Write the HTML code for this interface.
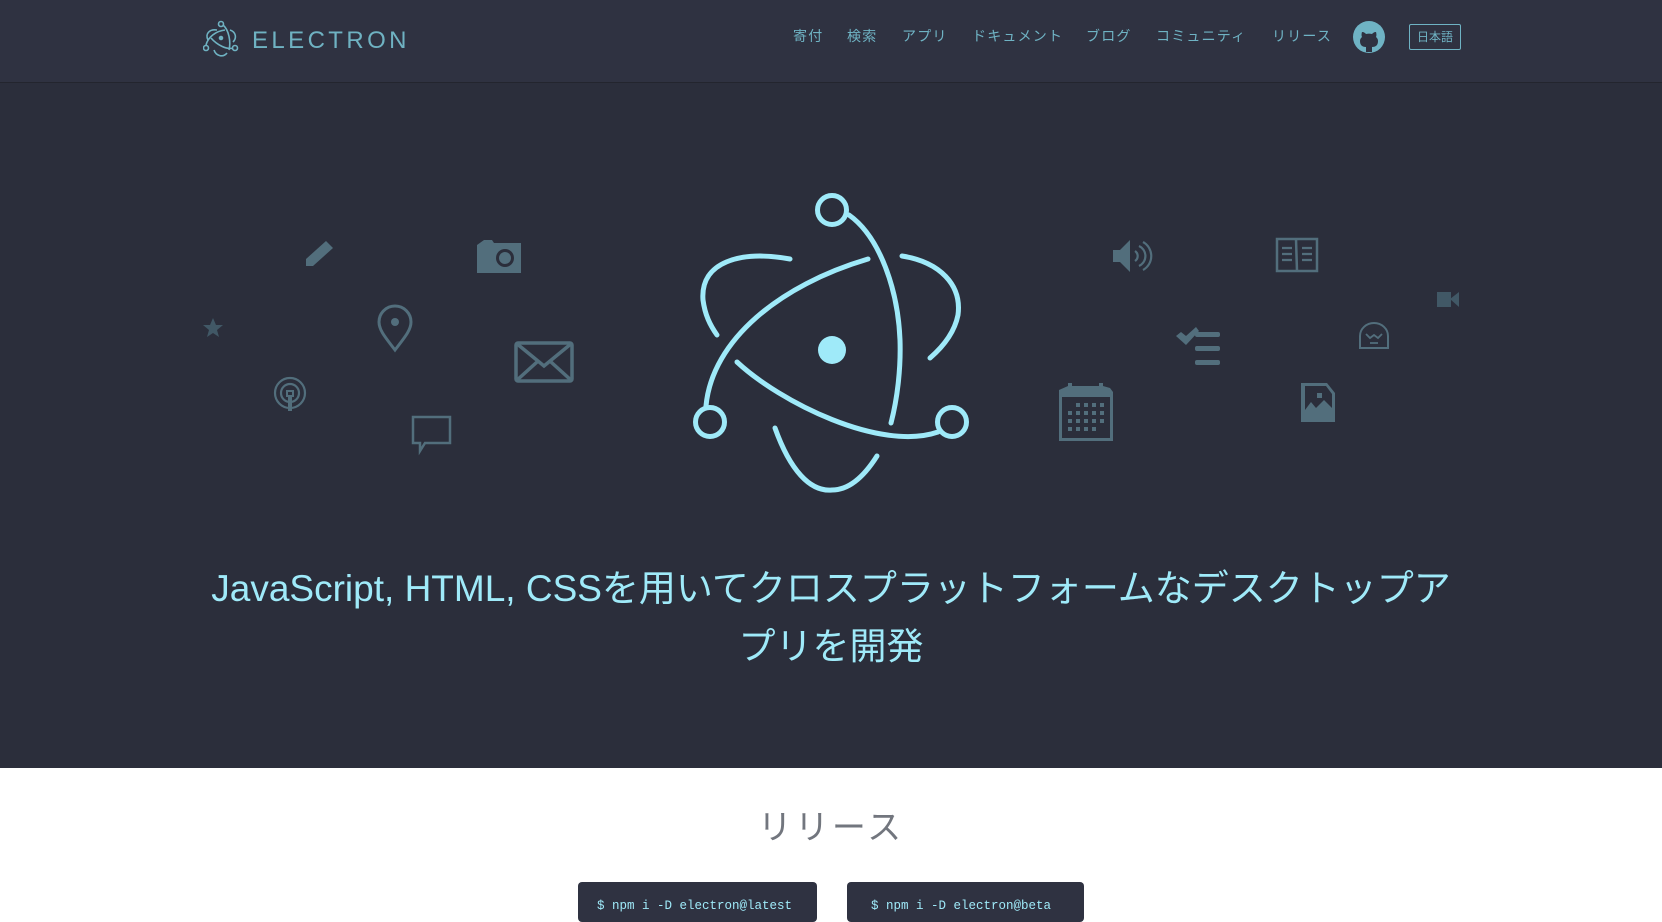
<!DOCTYPE html>
<html><head><meta charset="utf-8"><style>
*{margin:0;padding:0;box-sizing:border-box}
body{width:1662px;height:916px;overflow:hidden;background:#fff;font-family:"Liberation Sans","Noto Sans CJK JP",sans-serif;position:relative}
.hdr{position:absolute;left:0;top:0;width:1662px;height:83px;background:#2f3241;border-bottom:1px solid #23252e}
.hero{position:absolute;left:0;top:83px;width:1662px;height:685px;background:#2b2e3b}
.nav{position:absolute;top:26px;font-size:14px;color:#6fb3c4;line-height:20px;white-space:nowrap;letter-spacing:1.2px}
.logo{position:absolute;left:252px;top:27px;font-size:24px;letter-spacing:3.4px;color:#6fb2c2;line-height:28px}
.btn{position:absolute;left:1409px;top:24px;width:52px;height:26px;border:1px solid #6fb3c4;border-radius:2px;color:#6fb3c4;font-size:12px;text-align:center;line-height:24px}
h1{position:absolute;left:0;width:1662px;top:560px;text-align:center;font-weight:normal;font-size:37px;line-height:58px;color:#9feaf9;white-space:nowrap}
h2{position:absolute;left:0;width:1662px;top:806px;text-align:center;font-weight:normal;font-size:34px;color:#72767e;letter-spacing:3px;line-height:44px}
.code{position:absolute;top:882px;height:40px;background:#2f3241;border-radius:4px;font-family:"Liberation Mono",monospace;font-size:12.5px;color:#9feaf9;padding:17px 0 0 19px}
</style></head><body>
<div class="hdr"></div>
<div class="hero"></div>
<svg style="position:absolute;left:203px;top:20px" width="36" height="38" viewBox="0 0 36 38" fill="none" stroke="#6fb2c2" stroke-width="1.6">
<circle cx="18" cy="4" r="2.5"/><circle cx="3" cy="28" r="2.5"/><circle cx="32" cy="28" r="2.5"/><circle cx="18" cy="18" r="1.5" fill="#6fb2c2"/>
<path d="M20,5 C26,10 28,22 26,30"/><path d="M3,25 C5,17 13,11 22,10"/><path d="M8,18 C14,25 24,30 30,28"/><path d="M14,10 C6,9 2,14 5,20"/><path d="M27,10 C33,12 34,18 30,22"/><path d="M11,30 C13,36 20,38 24,33"/>
</svg>
<div class="logo">ELECTRON</div>
<div class="nav" style="left:793px">寄付</div>
<div class="nav" style="left:847px">検索</div>
<div class="nav" style="left:902px">アプリ</div>
<div class="nav" style="left:972px">ドキュメント</div>
<div class="nav" style="left:1086px">ブログ</div>
<div class="nav" style="left:1156px">コミュニティ</div>
<div class="nav" style="left:1272px">リリース</div>
<svg style="position:absolute;left:1353px;top:21px" width="32" height="32" viewBox="0 0 32 32"><circle cx="16" cy="16" r="16" fill="#6fb3c4"/><path d="M13,31 L13,26 C9,26 7,24 7,20 C7,18 8,17 9,16 C8,14 9,11 9,11 C11,11 12,12 13,13 C15,12.5 17,12.5 19,13 C20,12 21,11 23,11 C23,11 24,14 23,16 C24,17 25,18 25,20 C25,24 23,26 19,26 L19,31 Z" fill="#2f3241"/></svg>
<div class="btn">日本語</div>

<svg style="position:absolute;left:0;top:0" width="1662" height="768" fill="none">
<g stroke="#9feaf9" stroke-width="5" stroke-linecap="round">
<circle cx="832" cy="210" r="14.5"/><circle cx="710" cy="422" r="14.5"/><circle cx="952" cy="422" r="14.5"/>
<path d="M849,215 C880,237 898,290 900,340 C901,370 897,400 891,423"/>
<path d="M706,406 C712,340 780,285 868,259"/>
<path d="M737,362 C780,402 880,452 938,432"/>
<path d="M790,259 C740,250 700,262 703,300 C705,315 710,325 717,335"/>
<path d="M902,256 C940,262 962,285 958,315 C955,330 945,345 930,358"/>
<path d="M775,428 C790,470 810,492 832,490 C850,490 865,475 877,456"/>
</g>
<circle cx="832" cy="350" r="14" fill="#9feaf9"/>
<g fill="#526e7c" stroke="none">
<path d="M326,241 L333,248 L313,266 L306,266 L306,259 Z"/>
<path d="M477,245 L484,240 L492,240 L494,243 L521,243 L521,273 L477,273 Z"/>
<circle cx="505" cy="258" r="9" fill="#2b2e3b"/><circle cx="505" cy="258" r="6" fill="#526e7c"/>
<path d="M213,318 L216,325 L223,325 L217,330 L219,337 L213,333 L207,337 L209,330 L203,325 L210,325 Z" fill="#415866"/>
<circle cx="395" cy="322" r="4"/>
<path d="M1113,250 L1120,250 L1130,240 L1130,272 L1120,262 L1113,262 Z"/>
<rect x="1437" y="292" width="14" height="15" fill="#415866"/><path d="M1450,299 L1459,292 L1459,307 Z" fill="#415866"/>
<path d="M1176,336 L1181,332 L1186,336 L1196,327 L1199,331 L1186,345 Z"/>
<rect x="1195" y="332" width="25" height="5" rx="2"/><rect x="1195" y="346" width="25" height="5" rx="2"/><rect x="1195" y="360" width="25" height="5" rx="2"/>
<path d="M1059,390 L1068,386 L1068,383 L1072,383 L1072,386 L1099,386 L1099,383 L1103,383 L1103,386 L1110,388 L1113,392 L1113,441 L1059,441 Z"/>
<path d="M1301,383 L1327,383 L1335,393 L1335,422 L1301,422 Z"/>
</g>
<g fill="none" stroke="#526e7c" stroke-width="3">
<path d="M395,350 C385,337 379,330 379,322 A16,16 0 0 1 411,322 C411,330 405,337 395,350 Z"/>
<rect x="516" y="343" width="56" height="38" rx="2" stroke-width="3.5"/><path d="M516,343 L544,366 L572,343 M516,381 L537,362 M572,381 L551,362" stroke-width="3.5"/>
<circle cx="290" cy="393" r="15" stroke-width="2.2"/><circle cx="290" cy="393" r="9" stroke-width="2.2"/><path d="M287,391 h6 v5 h-2 v14 h-2 v-14 h-2 Z" stroke-width="2" fill="#2b2e3b"/>
<path d="M413,417 L450,417 L450,443 L425,443 L420,451 L420,443 L413,443 Z" stroke-width="2.5"/>
<path d="M1135,251 a6,6 0 0 1 0,10 M1139,246 a11,11 0 0 1 0,20 M1143,242 a16,16 0 0 1 0,28" stroke-width="2.2"/>
<path d="M1277,239 L1296,239 L1297,271 L1277,271 Z M1297,239 L1317,239 L1317,271 L1297,271" stroke-width="2.5"/>
<path d="M1282,248 h10 M1282,254 h10 M1282,260 h10 M1302,248 h10 M1302,254 h10 M1302,260 h10" stroke-width="2.2"/>
<path d="M1360,348 L1360,336 A14,13 0 0 1 1388,336 L1388,348 Z" stroke-width="2"/><path d="M1366,334 L1370,338 L1374,335 L1378,338 L1382,334 M1370,343 h8" stroke-width="1.8"/>
</g>
<g fill="#2b2e3b"><rect x="1062" y="397" width="48" height="41"/></g>
<g fill="#526e7c">
<rect x="1076" y="403" width="4" height="4"/><rect x="1084" y="403" width="4" height="4"/><rect x="1092" y="403" width="4" height="4"/><rect x="1100" y="403" width="4" height="4"/>
<rect x="1068" y="411" width="4" height="4"/><rect x="1076" y="411" width="4" height="4"/><rect x="1084" y="411" width="4" height="4"/><rect x="1092" y="411" width="4" height="4"/><rect x="1100" y="411" width="4" height="4"/>
<rect x="1068" y="419" width="4" height="4"/><rect x="1076" y="419" width="4" height="4"/><rect x="1084" y="419" width="4" height="4"/><rect x="1092" y="419" width="4" height="4"/><rect x="1100" y="419" width="4" height="4"/>
<rect x="1068" y="427" width="4" height="4"/><rect x="1076" y="427" width="4" height="4"/><rect x="1084" y="427" width="4" height="4"/><rect x="1092" y="427" width="4" height="4"/>
</g>
<path d="M1305,386 L1326,386 L1332,394 L1332,408 L1324,400 L1316,408 L1311,402 L1305,410 Z" fill="#2b2e3b"/>
<rect x="1317" y="393" width="5" height="5" fill="#526e7c"/>
</svg>

<h1>JavaScript, HTML, CSSを用いてクロスプラットフォームなデスクトップア<br>プリを開発</h1>
<h2>リリース</h2>
<div class="code" style="left:578px;width:239px">$ npm i -D electron@latest</div>
<div class="code" style="left:847px;width:237px;padding-left:24px">$ npm i -D electron@beta</div>
</body></html>
